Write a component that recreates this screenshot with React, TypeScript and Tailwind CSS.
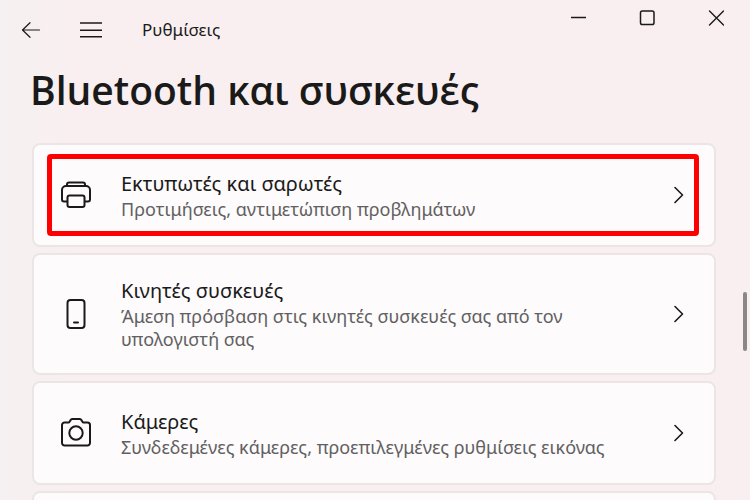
import type { ReactNode } from "react";

function BackIcon() {
  return (
    <svg width="20" height="20" viewBox="0 0 20 20" fill="none" stroke="currentColor" strokeWidth="1.2" strokeLinecap="round" strokeLinejoin="round" aria-hidden="true">
      <path d="M18.500 10H1.500M9 2.700 1.500 10 9 17.300" />
    </svg>
  );
}

function MenuIcon() {
  return (
    <svg width="22" height="18" viewBox="0 0 22 18" fill="none" stroke="currentColor" strokeWidth="1.4" aria-hidden="true">
      <path d="M0 2h22M0 9.300h22M0 15.800h22" />
    </svg>
  );
}

function PrinterIcon() {
  return (
    <svg width="32" height="32" viewBox="0 0 32 32" fill="none" stroke="currentColor" strokeWidth="2" strokeLinejoin="round" aria-hidden="true">
      <path d="M7 7V5.500a2 2 0 0 1 2-2h14a2 2 0 0 1 2 2V7" />
      <path d="M7.500 22.500H4a2 2 0 0 1-2-2V11a4 4 0 0 1 4-4h20a4 4 0 0 1 4 4v9.500a2 2 0 0 1-2 2h-3.500" />
      <rect x="7.500" y="16.500" width="17" height="11.500" rx="2" />
    </svg>
  );
}

function PhoneIcon() {
  return (
    <svg width="32" height="32" viewBox="0 0 32 32" fill="none" stroke="currentColor" strokeWidth="2" strokeLinecap="round" aria-hidden="true">
      <rect x="7.500" y="2" width="17" height="28" rx="3" />
      <path d="M14 24.500h4" />
    </svg>
  );
}

function CameraIcon() {
  return (
    <svg width="32" height="32" viewBox="0 0 32 32" fill="none" stroke="currentColor" strokeWidth="2" strokeLinejoin="round" aria-hidden="true">
      <path d="M4.500 5.500H9l1.600-2.400A2 2 0 0 1 12.200 2h7.600a2 2 0 0 1 1.600 1.100L23 5.500h4.500A2.500 2.500 0 0 1 30 8v18a2.500 2.500 0 0 1-2.500 2.500h-23A2.500 2.500 0 0 1 2 26V8a2.500 2.500 0 0 1 2.500-2.500Z" />
      <circle cx="16" cy="16" r="6.700" />
    </svg>
  );
}

function ChevronIcon() {
  return (
    <svg className="shrink-0" width="10" height="18" viewBox="0 0 10 18" fill="none" stroke="currentColor" strokeWidth="1.6" strokeLinecap="round" strokeLinejoin="round" aria-hidden="true">
      <path d="M1 1.500 8.500 9 1 16.500" />
    </svg>
  );
}

function WindowControls() {
  return (
    <div className="flex">
      <button type="button" aria-label="Ελαχιστοποίηση" className="flex h-9 w-[69px] items-center justify-center">
        <svg width="16" height="16" viewBox="0 0 16 16" stroke="currentColor" strokeWidth="1.5" aria-hidden="true">
          <path d="M1 7.500h15" />
        </svg>
      </button>
      <button type="button" aria-label="Μεγιστοποίηση" className="flex h-9 w-[69px] items-center justify-center">
        <svg width="16" height="16" viewBox="0 0 16 16" fill="none" stroke="currentColor" strokeWidth="1.5" aria-hidden="true">
          <rect x="1.500" y="1" width="13.500" height="13.500" rx="1.800" />
        </svg>
      </button>
      <button type="button" aria-label="Κλείσιμο" className="flex h-9 w-[69px] items-center justify-center">
        <svg width="16" height="16" viewBox="0 0 16 16" stroke="currentColor" strokeWidth="1.4" strokeLinecap="round" aria-hidden="true">
          <path d="m1.500 1 14 14M15.500 1l-14 14" />
        </svg>
      </button>
    </div>
  );
}

interface SettingCardProps {
  icon: ReactNode;
  title: string;
  description: string;
  highlighted?: boolean;
}

function SettingCard({ icon, title, description, highlighted }: SettingCardProps) {
  return (
    <li>
      <button
        type="button"
        className="relative flex min-h-[104px] w-full items-center rounded-lg border-2 border-[#ece5e6] bg-[#fdfbfc] py-[22px] pr-[30px] pl-[26px] text-left"
      >
        <span className="shrink-0">{icon}</span>
        <span className="ml-[29px] flex-1 pr-14">
          <span className="block text-xl leading-7">{title}</span>
          <span className="block text-lg leading-[23px] text-[#616061]">{description}</span>
        </span>
        <ChevronIcon />
        {highlighted && (
          <span className="absolute inset-y-[9px] right-[15px] left-[13px] rounded-sm border-5 border-[#ff0000]" />
        )}
      </button>
    </li>
  );
}

export default function App() {
  return (
    <div className="relative h-screen overflow-hidden bg-linear-to-r from-[#f5f0f1] to-[#f9eff0] to-10% font-['Noto_Sans','Open_Sans',sans-serif] text-[#1b1a1a]">
      <header className="flex items-start justify-between">
        <div className="flex h-[60px] items-center pl-[21px]">
          <button type="button" aria-label="Πίσω">
            <BackIcon />
          </button>
          <button type="button" aria-label="Μενού" className="ml-[39px]">
            <MenuIcon />
          </button>
          <span className="ml-10 text-[17px]">Ρυθμίσεις</span>
        </div>
        <WindowControls />
      </header>

      <main className="pr-[34px] pl-8">
        <h1 className="-ml-0.5 font-['Open_Sans','Noto_Sans',sans-serif] text-[39px] leading-[60px] font-semibold">
          Bluetooth και συσκευές
        </h1>
        <ul className="mt-[23px] flex flex-col gap-1.5">
          <SettingCard
            icon={<PrinterIcon />}
            title="Εκτυπωτές και σαρωτές"
            description="Προτιμήσεις, αντιμετώπιση προβλημάτων"
            highlighted
          />
          <SettingCard
            icon={<PhoneIcon />}
            title="Κινητές συσκευές"
            description="Άμεση πρόσβαση στις κινητές συσκευές σας από τον υπολογιστή σας"
          />
          <SettingCard
            icon={<CameraIcon />}
            title="Κάμερες"
            description="Συνδεδεμένες κάμερες, προεπιλεγμένες ρυθμίσεις εικόνας"
          />
          <li className="h-[104px] rounded-lg border-2 border-[#ece5e6] bg-[#fdfbfc]" />
        </ul>
      </main>

      <div className="absolute top-[292px] right-[3px] h-[59px] w-1 rounded-full bg-[#8b8788]" />
    </div>
  );
}
